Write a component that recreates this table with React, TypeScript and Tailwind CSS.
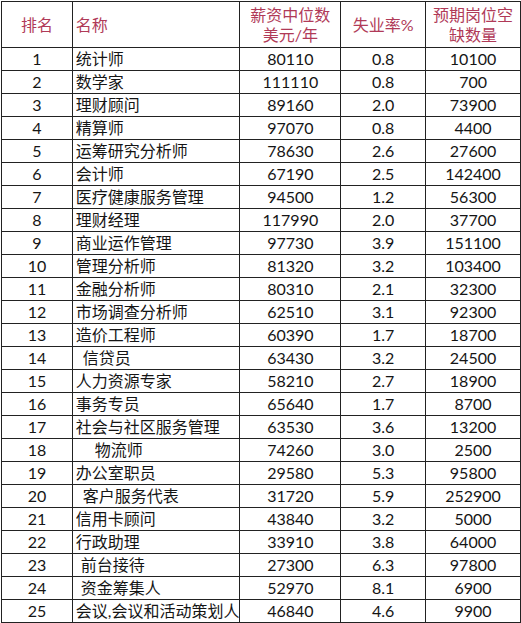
import React from "react";

type Row = [number, string, number, string, number, number?];

const rows: Row[] = [
  [1, "统计师", 80110, "0.8", 10100],
  [2, "数学家", 111110, "0.8", 700],
  [3, "理财顾问", 89160, "2.0", 73900],
  [4, "精算师", 97070, "0.8", 4400],
  [5, "运筹研究分析师", 78630, "2.6", 27600],
  [6, "会计师", 67190, "2.5", 142400],
  [7, "医疗健康服务管理", 94500, "1.2", 56300],
  [8, "理财经理", 117990, "2.0", 37700],
  [9, "商业运作管理", 97730, "3.9", 151100],
  [10, "管理分析师", 81320, "3.2", 103400],
  [11, "金融分析师", 80310, "2.1", 32300],
  [12, "市场调查分析师", 62510, "3.1", 92300],
  [13, "造价工程师", 60390, "1.7", 18700],
  [14, "信贷员", 63430, "3.2", 24500, 10],
  [15, "人力资源专家", 58210, "2.7", 18900],
  [16, "事务专员", 65640, "1.7", 8700],
  [17, "社会与社区服务管理", 63530, "3.6", 13200],
  [18, "物流师", 74260, "3.0", 2500, 22],
  [19, "办公室职员", 29580, "5.3", 95800],
  [20, "客户服务代表", 31720, "5.9", 252900, 10],
  [21, "信用卡顾问", 43840, "3.2", 5000],
  [22, "行政助理", 33910, "3.8", 64000],
  [23, "前台接待", 27300, "6.3", 97800, 8],
  [24, "资金筹集人", 52970, "8.1", 6900, 8],
  [25, "会议,会议和活动策划人", 46840, "4.6", 9900],
];

const font = {
  fontFamily: '"Lato", "Noto Sans CJK SC", sans-serif',
};

export default function App() {
  return (
    <div className="bg-white w-[521px] h-[623px] overflow-hidden pt-[1px] pl-[1px]" style={font}>
      <table className="table-fixed border-collapse text-[16px] text-[#151515]">
        <colgroup>
          <col className="w-[71px]" />
          <col className="w-[165px]" />
          <col className="w-[101px]" />
          <col className="w-[85px]" />
          <col className="w-[95px]" />
        </colgroup>
        <thead>
          <tr className="h-[46px] text-[#b03a58] leading-[20px]">
            <th className="border border-[#222] font-normal text-center align-middle p-0">排名</th>
            <th className="border border-[#222] font-normal text-left align-middle pl-[3px] pr-0 py-0">名称</th>
            <th className="border border-[#222] font-normal text-center align-middle p-0">
              <div>薪资中位数</div>
              <div>美元/年</div>
            </th>
            <th className="border border-[#222] font-normal text-center align-middle p-0">失业率%</th>
            <th className="border border-[#222] font-normal text-center align-middle p-0">
              <div>预期岗位空</div>
              <div>缺数量</div>
            </th>
          </tr>
        </thead>
        <tbody>
          {rows.map(([rank, name, salary, rate, vac, indent]) => (
            <tr key={rank} className="h-[23px] leading-[20px]">
              <td className="border border-[#222] text-center p-0">{rank}</td>
              <td
                className="border border-[#222] text-left py-0 pr-0 whitespace-nowrap overflow-hidden"
                style={{ paddingLeft: indent ?? 3 }}
              >
                {name}
              </td>
              <td className="border border-[#222] text-center p-0">{salary}</td>
              <td className="border border-[#222] text-center p-0">{rate}</td>
              <td className="border border-[#222] text-center p-0">{vac}</td>
            </tr>
          ))}
        </tbody>
      </table>
    </div>
  );
}
